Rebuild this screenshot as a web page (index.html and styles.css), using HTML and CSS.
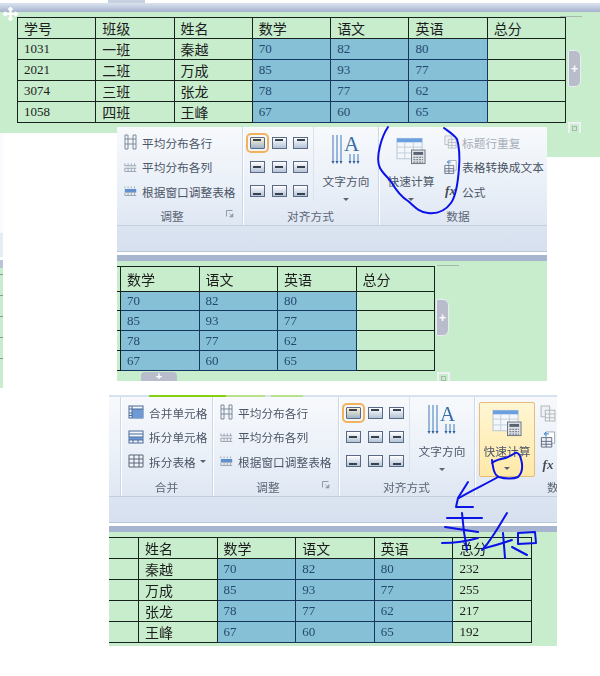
FILE: index.html
```html
<!DOCTYPE html>
<html>
<head>
    <title>快速计算</title>
    <link rel="stylesheet" href="styles.css">
</head>
<body>
    <svg class="defs" width="0" height="0">
        <defs>
            <symbol id="ic-rows" viewBox="0 0 13 16">
                <path d="M1 1h3v14H1zM9 1h3v14H9zM4 5h5M4 10h5M1 5h3M1 10h3M9 5h3M9 10h3" fill="none" stroke="#7d8a99"/>
            </symbol>
            <symbol id="ic-cols" viewBox="0 0 16 13">
                <path d="M1 2v3M5 2v3M9 2v3M13 2v3M1 8v4M5 8v4M9 8v4M13 8v4M1 5h14M1 12h14M1 8h14" fill="none" stroke="#8c98a6"/>
            </symbol>
            <symbol id="ic-fit" viewBox="0 0 16 13">
                <rect x="1" y="4" width="14" height="4" fill="#5b8fd0"/>
                <path d="M1 1v2M5 1v2M9 1v2M13 1v2M1 9v3M5 9v3M9 9v3M13 9v3M1 8h14M1 12h14" fill="none" stroke="#8c98a6"/>
            </symbol>
            <symbol id="ic-merge" viewBox="0 0 16 14">
                <rect x="1" y="1" width="14" height="12" fill="#f4f7fb" stroke="#4a6a98"/>
                <rect x="4" y="4" width="11" height="9" fill="#6e9ad6"/>
                <path d="M1 4h14M1 8h3M1 10.500h3M4 1v12" fill="none" stroke="#4a6a98"/>
            </symbol>
            <symbol id="ic-split" viewBox="0 0 16 14">
                <rect x="1" y="1" width="14" height="12" fill="#f4f7fb" stroke="#4a6a98"/>
                <rect x="1" y="7" width="14" height="3" fill="#6e9ad6"/>
                <path d="M1 4h14M1 7h14M1 10h14M5 10v3M10 10v3" fill="none" stroke="#4a6a98"/>
            </symbol>
            <symbol id="ic-table" viewBox="0 0 16 14">
                <path d="M1 1h14v12H1zM1 5h14M1 9h14M6 1v12M11 1v12" fill="#f0f3f8" stroke="#5a6678"/>
            </symbol>
            <symbol id="ic-direction" viewBox="0 0 30 32">
                <path d="M2 1v27M6 1v27M10 1v27M19 20v8M23 20v8M27 20v8" fill="none" stroke="#3f78b8"/>
                <path d="M0.500 27h3l-1.500 3zM4.500 27h3l-1.500 3zM8.500 27h3l-1.500 3zM17.500 27h3l-1.500 3zM21.500 27h3l-1.500 3zM25.500 27h3l-1.500 3z" fill="#2f5f98"/>
                <text x="13" y="17" class="icon-a">A</text>
            </symbol>
            <symbol id="ic-calc" viewBox="0 0 31 28">
                <rect x="1" y="1" width="26" height="21" fill="#f3f6fa" stroke="#b9c4d2"/>
                <rect x="1" y="1" width="26" height="4" fill="#6aa0e0"/>
                <path d="M1 10h26M1 16h26M9 5v17M18 5v17" fill="none" stroke="#c3cedb"/>
                <rect x="16" y="13" width="14" height="14" fill="#dfe3e8" stroke="#6b7480"/>
                <rect x="18" y="15" width="10" height="3" fill="#59636f"/>
                <path d="M18 20.500h10M18 23h10M18 25.500h10" fill="none" stroke="#59636f" stroke-dasharray="2 1"/>
            </symbol>
            <symbol id="ic-repeat" viewBox="0 0 15 16">
                <path d="M1 1h8v10H1z" fill="#eef1f5" stroke="#b4b9c0"/>
                <path d="M5 5h9v10H5zM5 8.500h9M5 12h9M9 5v10" fill="#f4f5f7" stroke="#b4b9c0"/>
            </symbol>
            <symbol id="ic-convert" viewBox="0 0 16 18">
                <path d="M6 1h9v12H6z" fill="#fff" stroke="#9aa6b6"/>
                <path d="M1 7h11v10H1zM1 11h11M1 14h11M6 7v10" fill="#f1f4f8" stroke="#5b6880"/>
                <path d="M4 3h5M4 3l2-2M4 3l2 2" fill="none" stroke="#2f7fd0"/>
            </symbol>
            <symbol id="ic-launch" viewBox="0 0 8 8">
                <path d="M0.500 0.500h6M0.500 0.500v6" fill="none" stroke="#8f9aa8"/>
                <path d="M3 3l3 3M7 3.500V7H3.500z" fill="#8f9aa8" stroke="#8f9aa8" stroke-width="0.600"/>
            </symbol>
            <symbol id="ic-move" viewBox="0 0 17 14">
                <path d="M8.500 1v12M2 7h13M6.500 3l2-2 2 2M6.500 11l2 2 2-2M4 5L2 7l2 2M13 5l2 2-2 2" fill="none" stroke="#ffffff" stroke-width="2.200"/>
            </symbol>
        </defs>
    </svg>

    <div class="canvas">

        <!-- first paste: table without the totals -->
        <section class="shard shard-top">
            <div class="top-chrome"><span class="chrome-tab"></span><span class="chrome-bar"></span></div>
            <div class="doc doc-top">
                <table class="grid">
                    <tr><th>学号</th><th>班级</th><th>姓名</th><th>数学</th><th>语文</th><th>英语</th><th>总分</th></tr>
                    <tr><td class="num">1031</td><td>一班</td><td>秦越</td><td class="sel">70</td><td class="sel">82</td><td class="sel">80</td><td></td></tr>
                    <tr><td class="num">2021</td><td>二班</td><td>万成</td><td class="sel">85</td><td class="sel">93</td><td class="sel">77</td><td></td></tr>
                    <tr><td class="num">3074</td><td>三班</td><td>张龙</td><td class="sel">78</td><td class="sel">77</td><td class="sel">62</td><td></td></tr>
                    <tr><td class="num">1058</td><td>四班</td><td>王峰</td><td class="sel">67</td><td class="sel">60</td><td class="sel">65</td><td></td></tr>
                </table>
            </div>
            <svg class="move-handle"><use href="#ic-move"/></svg>
            <span class="add-right add-right-a">+</span>
            <span class="resize resize-a"></span>
            <span class="ruler-mark ruler-a"></span>
        </section>
        <div class="shard green-tail"></div>

        <!-- leftover edge of another paste -->
        <div class="shard sliver">
            <span class="sliver-page"></span>
            <span class="sliver-band"></span>
            <span class="sliver-doc"></span>
        </div>

        <!-- second paste: ribbon, table selected -->
        <section class="shard shard-mid">
            <div class="ribbon ribbon-mid">
                <div class="group group-adjust">
                    <div class="list">
                        <div class="item"><svg class="ic"><use href="#ic-rows"/></svg>平均分布各行</div>
                        <div class="item"><svg class="ic"><use href="#ic-cols"/></svg>平均分布各列</div>
                        <div class="item"><svg class="ic"><use href="#ic-fit"/></svg>根据窗口调整表格</div>
                    </div>
                    <div class="label">调整<svg class="launch"><use href="#ic-launch"/></svg></div>
                </div>
                <div class="group group-align">
                    <div class="align-row">
                        <div class="align-grid">
                            <span class="al l t on"><i></i></span><span class="al c t"><i></i></span><span class="al r t"><i></i></span>
                            <span class="al l m"><i></i></span><span class="al c m"><i></i></span><span class="al r m"><i></i></span>
                            <span class="al l b"><i></i></span><span class="al c b"><i></i></span><span class="al r b"><i></i></span>
                        </div>
                        <div class="big">
                            <svg class="ic-big"><use href="#ic-direction"/></svg>
                            <span>文字方向</span><em class="caret"></em>
                        </div>
                    </div>
                    <div class="label label-shift">对齐方式</div>
                </div>
                <div class="group group-data">
                    <div class="data-row">
                        <div class="big big-calc">
                            <svg class="ic-big"><use href="#ic-calc"/></svg>
                            <span>快速计算</span><em class="caret"></em>
                        </div>
                        <div class="list list-data">
                            <div class="item muted"><svg class="ic"><use href="#ic-repeat"/></svg>标题行重复</div>
                            <div class="item"><svg class="ic"><use href="#ic-convert"/></svg>表格转换成文本</div>
                            <div class="item"><span class="ic fx">fx</span>公式</div>
                        </div>
                    </div>
                    <div class="label">数据</div>
                </div>
            </div>
            <div class="band"></div>
            <div class="strip"></div>
            <div class="doc doc-mid">
                <table class="grid grid-mid">
                    <tr><th class="stub"></th><th>数学</th><th>语文</th><th>英语</th><th>总分</th></tr>
                    <tr><td class="stub"></td><td class="sel">70</td><td class="sel">82</td><td class="sel">80</td><td></td></tr>
                    <tr><td class="stub"></td><td class="sel">85</td><td class="sel">93</td><td class="sel">77</td><td></td></tr>
                    <tr><td class="stub"></td><td class="sel">78</td><td class="sel">77</td><td class="sel">62</td><td></td></tr>
                    <tr><td class="stub"></td><td class="sel">67</td><td class="sel">60</td><td class="sel">65</td><td></td></tr>
                </table>
            </div>
            <span class="add-right add-right-b">+</span>
            <span class="add-bottom">+</span>
            <span class="resize resize-b"></span>
            <span class="ruler-mark ruler-b"></span>
        </section>

        <!-- third paste: after the sum -->
        <section class="shard shard-low">
            <div class="tabs"><span class="tab-on"></span><span class="tab-soft"></span><span class="tab-soft tab-end"></span></div>
            <div class="ribbon ribbon-low">
                <div class="group group-stub"></div>
                <div class="group group-merge">
                    <div class="list">
                        <div class="item"><svg class="ic ic-wide"><use href="#ic-merge"/></svg>合并单元格</div>
                        <div class="item"><svg class="ic ic-wide"><use href="#ic-split"/></svg>拆分单元格</div>
                        <div class="item"><svg class="ic ic-wide"><use href="#ic-table"/></svg>拆分表格<em class="caret caret-inline"></em></div>
                    </div>
                    <div class="label label-plain">合并</div>
                </div>
                <div class="group group-adjust">
                    <div class="list">
                        <div class="item"><svg class="ic"><use href="#ic-rows"/></svg>平均分布各行</div>
                        <div class="item"><svg class="ic"><use href="#ic-cols"/></svg>平均分布各列</div>
                        <div class="item"><svg class="ic"><use href="#ic-fit"/></svg>根据窗口调整表格</div>
                    </div>
                    <div class="label">调整<svg class="launch"><use href="#ic-launch"/></svg></div>
                </div>
                <div class="group group-align">
                    <div class="align-row">
                        <div class="align-grid">
                            <span class="al l t on"><i></i></span><span class="al c t"><i></i></span><span class="al r t"><i></i></span>
                            <span class="al l m"><i></i></span><span class="al c m"><i></i></span><span class="al r m"><i></i></span>
                            <span class="al l b"><i></i></span><span class="al c b"><i></i></span><span class="al r b"><i></i></span>
                        </div>
                        <div class="big">
                            <svg class="ic-big"><use href="#ic-direction"/></svg>
                            <span>文字方向</span><em class="caret"></em>
                        </div>
                    </div>
                    <div class="label label-shift">对齐方式</div>
                </div>
                <div class="group group-data">
                    <div class="data-row">
                        <div class="big big-calc hot">
                            <svg class="ic-big"><use href="#ic-calc"/></svg>
                            <span>快速计算</span><em class="caret"></em>
                        </div>
                        <div class="list list-icons">
                            <svg class="ic"><use href="#ic-repeat"/></svg>
                            <svg class="ic"><use href="#ic-convert"/></svg>
                            <span class="ic fx">fx</span>
                        </div>
                    </div>
                    <div class="label label-cut">数据</div>
                </div>
            </div>
            <div class="band"></div>
            <div class="strip"></div>
            <div class="doc doc-low">
                <table class="grid grid-low">
                    <tr><th class="stub"></th><th>姓名</th><th>数学</th><th>语文</th><th>英语</th><th>总分</th></tr>
                    <tr><td class="stub"></td><td>秦越</td><td class="sel">70</td><td class="sel">82</td><td class="sel">80</td><td class="num">232</td></tr>
                    <tr><td class="stub"></td><td>万成</td><td class="sel">85</td><td class="sel">93</td><td class="sel">77</td><td class="num">255</td></tr>
                    <tr><td class="stub"></td><td>张龙</td><td class="sel">78</td><td class="sel">77</td><td class="sel">62</td><td class="num">217</td></tr>
                    <tr><td class="stub"></td><td>王峰</td><td class="sel">67</td><td class="sel">60</td><td class="sel">65</td><td class="num">192</td></tr>
                </table>
            </div>
        </section>

        <!-- pen marks drawn over the pastes -->
        <svg class="ink" viewBox="0 0 600 676">
            <path d="M388 127C384 133 382 138 380 146C378 154 377 162 380 168C383 174 388 177 392 183C396 190 400 196 408 201C414 206 418 212 428 213C438 214 446 210 451 203C456 196 458 182 459 168C460 156 459 146 457 139C453 134 448 131 444 128"/>
            <path d="M492 460C493 468 494 475 499 477C505 479 514 479 518 477C522 473 523 466 521 459C520 455 518 452 515 453C511 456 506 458 501 459C497 460 494 461 492 463"/>
            <path d="M498 477C486 484 472 490 459 498"/>
            <path d="M468 482L458 498L456 507L473 507"/>
            <path d="M447 518L482 518"/>
            <path d="M445 527L478 532"/>
            <path d="M442 543C454 543 468 541 478 538"/>
            <path d="M462 513C463 526 465 540 467 550"/>
            <path d="M507 513C502 521 497 530 492 537C489 542 486 546 482 550"/>
            <path d="M485 548C494 546 503 543 512 540"/>
            <path d="M503 533L505 558"/>
            <path d="M518 533L535 532L536 543L518 544L518 533"/>
            <path d="M512 547L527 555"/>
        </svg>
    </div>
</body>
</html>
```

FILE: styles.css
```css
html, body {
    margin: 0;
    padding: 0;
    background-color: #ffffff;
}

.defs {
    position: absolute;
}

.canvas {
    position: relative;
    width: 600px;
    height: 676px;
    overflow: hidden;
    font-family: "Noto Sans CJK SC", sans-serif;
    filter: blur(0.3px);
}

/* each paste sits at its own spot, that is the picture */
.shard {
    position: absolute;
}

.shard-top {
    left: 0;
    top: 0;
    width: 600px;
    height: 133px;
}

.green-tail {
    left: 547px;
    top: 133px;
    width: 53px;
    height: 24px;
    background-color: #c7edcc;
}

.sliver {
    left: 0;
    top: 133px;
    width: 3px;
    height: 255px;
    display: flex;
    flex-direction: column;
}

.sliver-page {
    height: 100px;
    background-color: #f8fafd;
}

.sliver-band {
    height: 35px;
    background: linear-gradient(#e6ecf5 70%, #ffffff 70%, #ffffff 76%, #b9c3d8 76%);
}

.sliver-doc {
    flex: 1;
    background: repeating-linear-gradient(#c7edcc 0, #c7edcc 20px, #8a9a8e 20px, #8a9a8e 21px) 0 -14px;
}

.shard-mid {
    left: 117px;
    top: 127px;
    width: 430px;
    height: 254px;
    overflow: hidden;
}

.shard-low {
    left: 109px;
    top: 395px;
    width: 448px;
    height: 251px;
    overflow: hidden;
}

.top-chrome {
    height: 12px;
    display: flex;
    flex-direction: column;
}

.chrome-tab {
    display: block;
    height: 3px;
    margin-left: 108px;
    width: 37px;
    background-color: #c5d0e0;
}

.chrome-bar {
    display: block;
    height: 9px;
    background: linear-gradient(#dbe3f0, #a6b3cf);
}

.doc {
    background-color: #c7edcc;
}

.doc-top {
    height: 121px;
    padding: 5px 0 0 17px;
    box-sizing: border-box;
}

.doc-mid {
    height: 120px;
    padding: 5px 0 0 0;
    box-sizing: border-box;
}

.doc-low {
    height: 114px;
    padding: 5px 0 0 0;
    box-sizing: border-box;
}

/* tables */
.grid {
    border-collapse: collapse;
    table-layout: fixed;
    width: 549px;
    height: 105px;
    font-family: "Liberation Serif", "Noto Sans CJK SC", serif;
    font-size: 14px;
    color: #1c1c1c;
}

.grid-mid {
    width: 318px;
}

.grid-low {
    width: 423px;
}

.grid th,
.grid td {
    border: 1px solid #18221c;
    padding: 0 0 0 6px;
    text-align: left;
    font-weight: normal;
    overflow: hidden;
    white-space: nowrap;
}

.grid-low .stub {
    width: 23px;
    border-left: none;
}

.grid-mid th.stub,
.grid-mid td.stub {
    width: 3px;
    padding: 0;
    border-left: none;
}

.grid .num {
    font-size: 13px;
}

.grid .sel {
    background-color: #86c0d6;
    color: #25486f;
    font-size: 13px;
    border-color: #15365f;
}

/* table handles */
.move-handle {
    position: absolute;
    left: 2px;
    top: 7px;
    width: 17px;
    height: 14px;
}

.add-right {
    position: absolute;
    width: 11px;
    background-color: #b9bccb;
    border: 1px solid #e9edf2;
    border-radius: 2px 6px 6px 2px;
    color: #ffffff;
    font: bold 12px "Liberation Sans", sans-serif;
    display: flex;
    align-items: center;
    justify-content: center;
}

.add-right-a {
    left: 568px;
    top: 50px;
    height: 35px;
}

.add-right-b {
    left: 319px;
    top: 172px;
    height: 35px;
}

.add-bottom {
    position: absolute;
    left: 24px;
    top: 245px;
    width: 36px;
    height: 9px;
    background-color: #b9bccb;
    color: #ffffff;
    border-radius: 4px 4px 0 0;
    font: bold 11px/9px "Liberation Sans", sans-serif;
    text-align: center;
}

.resize {
    position: absolute;
    width: 9px;
    height: 9px;
    border: 2px solid #eef1f3;
    background-color: #c7edcc;
}

.resize::after {
    content: "";
    display: block;
    width: 3px;
    height: 3px;
    margin: 2px;
    border: 1px solid #a9b8ad;
}

.resize-a {
    left: 568px;
    top: 122px;
}

.resize-b {
    left: 320px;
    top: 245px;
}

.ruler-mark {
    position: absolute;
    height: 1px;
    background-color: #a9b8ad;
}

.ruler-a {
    left: 560px;
    top: 16px;
    width: 22px;
}

.ruler-b {
    left: 320px;
    top: 138px;
    width: 22px;
}

/* ribbon */
.ribbon {
    display: flex;
    height: 99px;
    background: linear-gradient(#f7f9fc, #eaf0f8 60%, #dfe7f3);
    border-bottom: 1px solid #c3cfe0;
    box-sizing: border-box;
    color: #4b5566;
    font-size: 11.7px;
    overflow: hidden;
}

.ribbon-low {
    height: 100px;
}

.group {
    flex: none;
    box-sizing: border-box;
    display: flex;
    flex-direction: column;
    border-right: 1px solid #ced8e6;
    box-shadow: 1px 0 0 #ffffff;
}

.group-stub {
    width: 12px;
}

.group-merge {
    width: 92px;
    padding-left: 7px;
}

.group-adjust {
    width: 126px;
    padding-left: 7px;
}

.group-align {
    width: 136px;
}

.group-data {
    width: 180px;
    border-right: none;
    box-shadow: none;
}

.list {
    flex: 1;
    min-height: 0;
    display: flex;
    flex-direction: column;
    gap: 8px;
    padding-top: 7px;
}

.item {
    display: flex;
    align-items: center;
    gap: 5px;
    height: 16.500px;
    white-space: nowrap;
}

.item.muted {
    color: #a8aeb8;
}

.ic {
    flex: none;
    width: 13px;
    height: 16px;
}

.ic-wide {
    width: 16px;
    height: 14px;
}

.fx {
    font: italic bold 13px/16px "Liberation Serif", serif;
    color: #444c58;
    text-align: center;
}

.label {
    flex: none;
    height: 24px;
    line-height: 30px;
    text-align: center;
    position: relative;
    color: #5c6676;
    padding-right: 22px;
}

.label-plain {
    padding-right: 7px;
}

.label-shift {
    padding-left: 4px;
    padding-right: 0;
    box-sizing: border-box;
    text-indent: -4px;
}

.label-cut {
    text-align: left;
    padding-left: 72px;
    padding-right: 0;
}

.launch {
    position: absolute;
    right: 8px;
    top: 9px;
    width: 8px;
    height: 8px;
}

.align-row {
    flex: 1;
    min-height: 0;
    display: flex;
}

.align-grid {
    display: grid;
    grid-template-columns: repeat(3, 15px);
    grid-auto-rows: 12px;
    column-gap: 6.500px;
    row-gap: 12px;
    padding: 10px 0 0 7px;
    width: 71px;
    box-sizing: border-box;
    border-right: 1px solid #dbe3ee;
}

.al {
    position: relative;
    display: flex;
    box-sizing: border-box;
    padding: 1px 2px;
    border: 1px solid #5a6a85;
    background: linear-gradient(#ffffff, #b4c3d6);
}

.al i {
    display: block;
    width: 8px;
    height: 2px;
    background-color: #38414f;
}

.al.l { justify-content: flex-start; }
.al.c { justify-content: center; }
.al.r { justify-content: flex-end; }
.al.t { align-items: flex-start; }
.al.m { align-items: center; }
.al.b { align-items: flex-end; }

.al.on {
    outline: 2px solid #f0b35c;
    outline-offset: 2px;
    border-radius: 1px;
    background: linear-gradient(#fff4d0, #9fb4cc);
}

.big {
    flex: 1;
    display: flex;
    flex-direction: column;
    align-items: center;
    padding-top: 7px;
    white-space: nowrap;
    box-sizing: border-box;
}

.ic-big {
    width: 30px;
    height: 32px;
    margin-bottom: 6px;
}

.icon-a {
    font: 21px "Liberation Serif", serif;
    fill: #3a6ea8;
}

.caret {
    display: block;
    margin-top: 9px;
    width: 0;
    height: 0;
    border-left: 3px solid transparent;
    border-right: 3px solid transparent;
    border-top: 3px solid #5a6270;
}

.caret-inline {
    margin: 0 0 0 -1px;
}

.data-row {
    flex: 1;
    min-height: 0;
    display: flex;
}

.big-calc {
    flex: none;
    width: 64px;
    margin-right: 1px;
    padding-top: 10px;
}

.big-calc .ic-big {
    height: 28px;
    margin-bottom: 7px;
}

.list-icons {
    padding-left: 2px;
    padding-top: 8px;
    gap: 9px;
}

.list-icons .ic {
    width: 16px;
    height: 17px;
}

.hot {
    width: 56px;
    margin: 5px 3px -5px 4px;
    padding-top: 6px;
    background: linear-gradient(#fff6d4, #ffe9a8);
    border: 1px solid #e6bd78;
    border-radius: 2px;
}

.hot .ic-big {
    margin-bottom: 5px;
}

.hot .caret {
    margin-top: 8px;
}

.band {
    height: 26px;
    box-sizing: border-box;
    background: linear-gradient(#dbe5f2, #d6e0ee);
    border-bottom: 1px solid #b9c6da;
}

.strip {
    height: 6px;
    margin-top: 3px;
    background-color: #a8b5d0;
}

.tabs {
    display: flex;
    height: 2px;
    background-color: #d7e2f0;
    padding-left: 40px;
}

.tab-on {
    width: 77px;
    background-color: #86d010;
}

.tab-soft {
    width: 39px;
    background-color: #b9e08a;
}

.tab-end {
    width: 32px;
    margin-left: 6px;
}

/* pen marks */
.ink {
    position: absolute;
    left: 0;
    top: 0;
    width: 600px;
    height: 676px;
    pointer-events: none;
}

.ink path {
    fill: none;
    stroke: #0a12e8;
    stroke-width: 2;
    stroke-linecap: round;
    stroke-linejoin: round;
}
```
